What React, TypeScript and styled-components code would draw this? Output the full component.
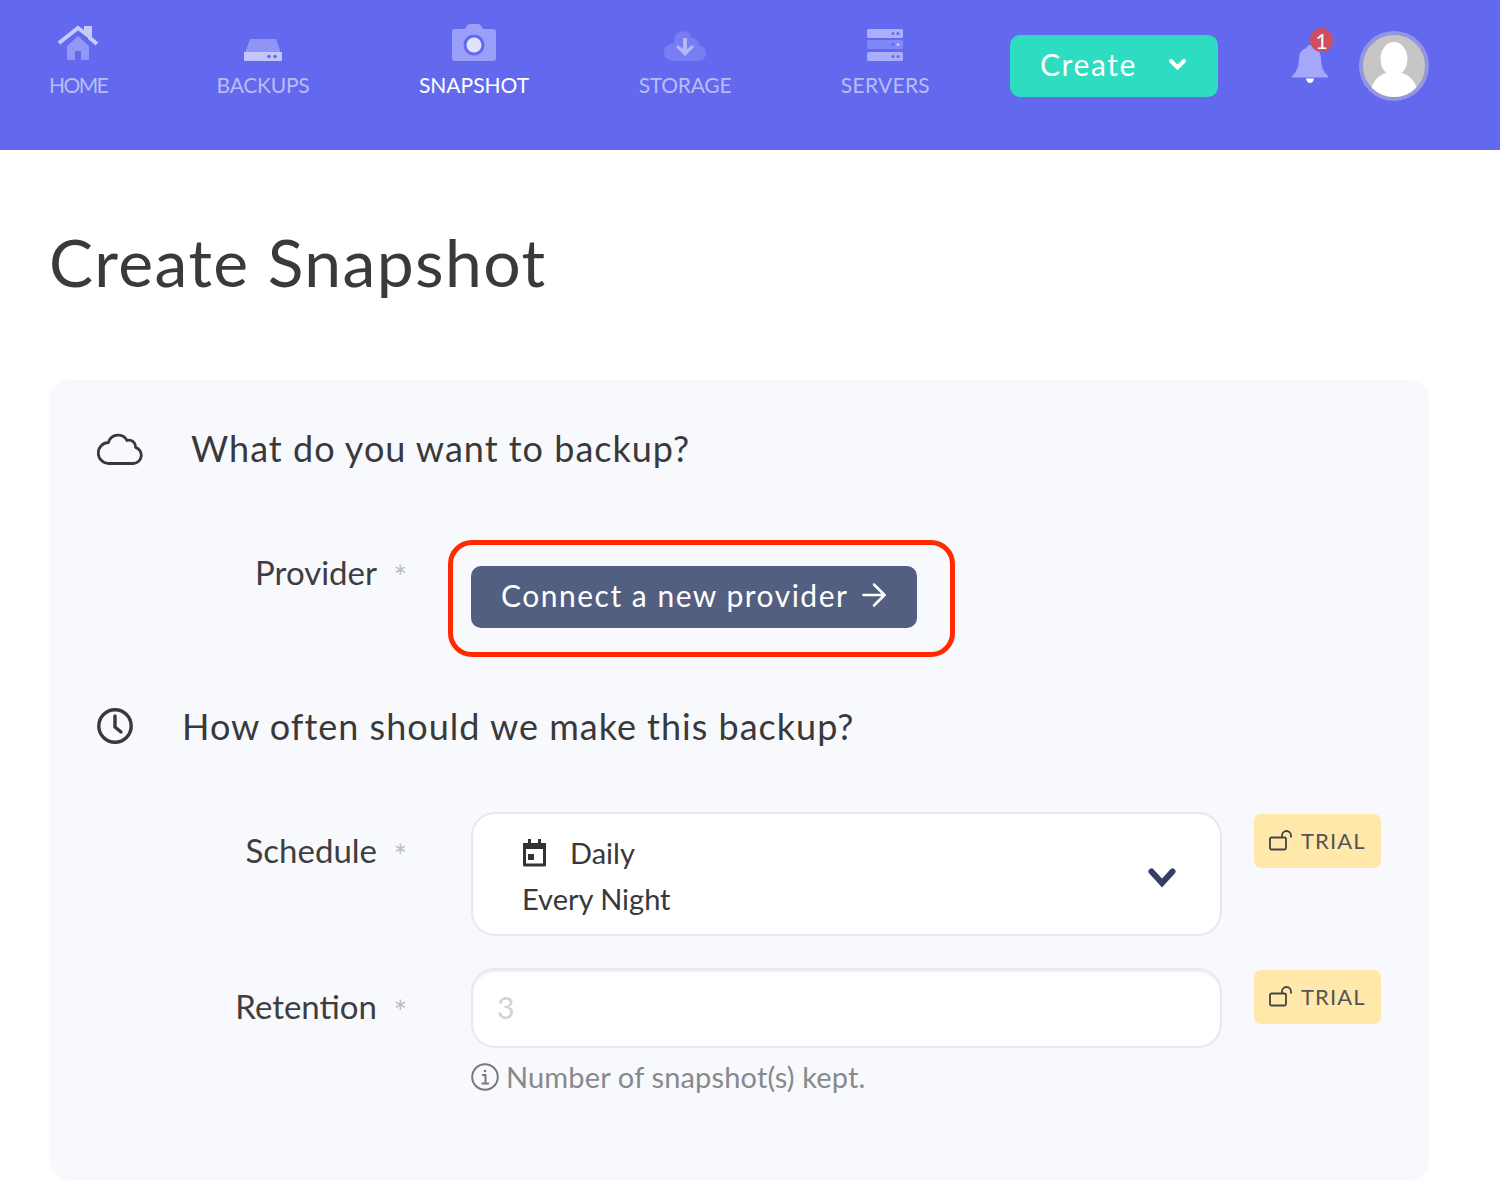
import React from 'react';
import styled, { createGlobalStyle } from 'styled-components';
import { ArrowRight } from 'lucide-react';

const GlobalStyle = createGlobalStyle`
  html, body {
    margin: 0;
    padding: 0;
    background: #ffffff;
    font-family: 'Lato', 'Noto Sans', sans-serif;
    color: #3a3a3c;
  }
  * { box-sizing: border-box; }
`;

const Header = styled.header`
  height: 150px;
  background: #6269ee;
  display: flex;
  align-items: flex-start;
  padding: 24px 71px 0 49px;
`;

const Nav = styled.nav`
  display: flex;
  gap: 109.5px;
  flex-shrink: 0;
`;

const NavItem = styled.a<{ $active?: boolean; $spacing?: number }>`
  display: flex;
  flex-direction: column;
  align-items: center;
  gap: 11px;
  font-size: 21px;
  line-height: 26px;
  letter-spacing: ${({ $spacing }) => $spacing ?? -0.25}px;
  color: ${({ $active }) => ($active ? '#ffffff' : '#b9bcf7')};
`;

const NavIcon = styled.svg`
  height: 37px;
  display: block;
`;

const CreateButton = styled.button`
  flex-shrink: 0;
  width: 208px;
  height: 62px;
  margin: 11px 0 0 80px;
  padding: 0 31px 4px 30px;
  border: 0;
  border-radius: 10px;
  background: #2ddcc1;
  color: #ffffff;
  font: inherit;
  font-size: 30px;
  letter-spacing: 1.6px;
  display: flex;
  align-items: center;
  justify-content: space-between;
`;

const BellWrap = styled.div`
  position: relative;
  flex-shrink: 0;
  width: 36px;
  height: 38px;
  margin: 21px 0 0 74px;
`;

const Badge = styled.span`
  position: absolute;
  top: -17px;
  left: 18px;
  width: 23px;
  height: 24px;
  border-radius: 50%;
  background: #cf4f61;
  color: #ffffff;
  font-size: 21px;
  line-height: 25px;
  text-align: center;
`;

const Avatar = styled.div`
  flex-shrink: 0;
  width: 70px;
  height: 70px;
  margin: 7px 0 0 31px;
  border-radius: 50%;
  border: 4px solid #9496e2;
  background: #c6c6c6;
  overflow: hidden;
`;

const Main = styled.main`
  padding: 0 71px 14px 49px;
`;

const Title = styled.h1`
  margin: 0;
  padding: 73px 0 0 0;
  height: 230px;
  font-size: 66px;
  line-height: 78px;
  font-weight: 400;
  letter-spacing: 1.4px;
`;

const Card = styled.section`
  height: 800px;
  padding: 44px 48px 0 48px;
  border-radius: 20px;
  background: #f8f9fd;
`;

const SectionHead = styled.h2<{ $gap: number; $spaced?: boolean }>`
  margin: ${({ $spaced }) => ($spaced ? '74px' : '0')} 0 0 0;
  height: 48px;
  display: flex;
  align-items: center;
  gap: ${({ $gap }) => $gap}px;
  font-size: 36px;
  font-weight: 400;
  line-height: 48px;
  color: #39393b;
  letter-spacing: 1px;
`;

const Row = styled.div<{ $top: number }>`
  display: grid;
  grid-template-columns: 374px 751px 127px;
  column-gap: 32px;
  align-items: start;
  margin-top: ${({ $top }) => $top}px;
  margin-left: -32px;
  width: max-content;
`;

const Label = styled.label<{ $offset?: number }>`
  display: flex;
  justify-content: flex-end;
  padding: ${({ $offset }) => $offset ?? 17}px 62px 0 0;
  position: relative;
  font-size: 33px;
  line-height: 42px;
  color: #3e3e40;
`;

const Star = styled.span`
  position: absolute;
  right: 32px;
  top: 26px;
  font-size: 32px;
  line-height: 36px;
  color: #bdbdbf;
`;

const ButtonSlot = styled.div`
  position: relative;
  width: 446px;
  margin-top: 33px;
`;

const Annotation = styled.div`
  position: absolute;
  top: -26px;
  left: -23px;
  width: 507px;
  height: 117px;
  border: 5px solid #ff2a00;
  border-radius: 24px;
  pointer-events: none;
`;

const ConnectButton = styled.button`
  width: 446px;
  height: 62px;
  border: 0;
  border-radius: 10px;
  padding: 0 25px 4px 30px;
  background: #535f80;
  color: #ffffff;
  font: inherit;
  font-size: 30px;
  letter-spacing: 1.5px;
  white-space: nowrap;
  display: flex;
  align-items: center;
  justify-content: space-between;
`;

const Select = styled.div`
  height: 124px;
  padding: 18px 44px 0 49px;
  border: 2px solid #e8e9ec;
  border-radius: 24px;
  background: #ffffff;
  display: flex;
  align-items: center;
  justify-content: space-between;
  font-size: 29px;
  color: #38383a;
`;

const SelectLines = styled.div`
  display: flex;
  flex-direction: column;
  gap: 4px;
  align-self: flex-start;
`;

const SelectLine = styled.div`
  display: flex;
  align-items: center;
  gap: 23px;
  line-height: 42px;
`;

const Chevron = styled.svg`
  margin-top: -10px;
`;

const Input = styled.div`
  height: 80px;
  padding: 0 24px 2px;
  border: 2px solid #e8e9ec;
  border-radius: 24px;
  background: #ffffff;
  box-shadow: inset 0 2px 2px #eeeff1;
  display: flex;
  align-items: center;
  font-size: 30px;
  color: #ced3da;
`;

const Hint = styled.div`
  display: flex;
  align-items: center;
  gap: 7px;
  margin-top: 13px;
  font-size: 29px;
  line-height: 32px;
  letter-spacing: 0.15px;
  color: #88898c;
`;

const TrialBadge = styled.div<{ $top: number }>`
  height: 54px;
  margin-top: ${({ $top }) => $top}px;
  padding: 0 0 1px 15px;
  border-radius: 7px;
  background: #ffe8a9;
  display: flex;
  align-items: center;
  gap: 8px;
  font-size: 22px;
  letter-spacing: 1.1px;
  color: #555555;
`;

function TrialTag({ top }: { top: number }) {
  return (
    <TrialBadge $top={top}>
      <svg width="24" height="21" viewBox="0 0 24 21" fill="none" stroke="#444" strokeWidth="1.8">
        <rect x="1" y="7.500" width="16" height="12" rx="1.500" />
        <path d="M13 7.500V5.500a4.500 4.500 0 0 1 9 0v2" />
      </svg>
      TRIAL
    </TrialBadge>
  );
}

function App() {
  return (
    <>
      <GlobalStyle />
      <Header>
        <Nav>
          <NavItem $spacing={-1.6}>
            <NavIcon viewBox="0 0 42 37" width="42">
              <path d="M10 22 21 12l11 10v14h-8v-9h-6v9h-8z" fill="#9296f5" />
              <path d="M2 19 21 4l8 6V4h4v10l7 6" fill="none" stroke="#c6c9fa" strokeWidth="4" />
            </NavIcon>
            HOME
          </NavItem>
          <NavItem>
            <NavIcon viewBox="0 0 40 37" width="40">
              <path d="M7 15h26l5 14H2z" fill="#8f94f5" />
              <path d="M1 28h38v8a1 1 0 0 1-1 1H2a1 1 0 0 1-1-1z" fill="#c3c6fa" />
              <circle cx="26" cy="32.500" r="1.800" fill="#6269ee" />
              <circle cx="32" cy="32.500" r="1.800" fill="#6269ee" />
            </NavIcon>
            BACKUPS
          </NavItem>
          <NavItem $active $spacing={0}>
            <NavIcon viewBox="0 0 44 37" width="44">
              <path d="M13 5 15 1.500Q16 0 18 0h8q2 0 3 1.500L31 5h10q3 0 3 3v26q0 3-3 3H3q-3 0-3-3V8q0-3 3-3z" fill="#9a9ff7" />
              <circle cx="22" cy="21" r="10.500" fill="#6269ee" />
              <circle cx="22" cy="21" r="7.500" fill="#e1e3fd" />
            </NavIcon>
            SNAPSHOT
          </NavItem>
          <NavItem>
            <NavIcon viewBox="0 0 44 37" width="44">
              <path d="M10 37q-9-1-9-9 0-6 6-8 2-1 4-1 0-11 9-12 7 0 8 7 7-1 8 7 7 2 7 8 0 7-8 8z" fill="#777df2" />
              <path d="M20 14h4v11l5-4 2 2-9 9-9-9 2-2 5 4z" fill="#b4b7f9" />
            </NavIcon>
            STORAGE
          </NavItem>
          <NavItem $spacing={0.3}>
            <NavIcon viewBox="0 0 36 37" width="36">
              <rect y="5" width="36" height="9" rx="1.500" fill="#abaffa" />
              <rect y="16" width="36" height="9" rx="1.500" fill="#8187f4" />
              <rect y="28" width="36" height="9" rx="1.500" fill="#abaffa" />
              <circle cx="26" cy="9.500" r="1.500" fill="#6269ee" /><circle cx="31" cy="9.500" r="1.500" fill="#6269ee" />
              <circle cx="26" cy="20.500" r="1.500" fill="#6269ee" /><circle cx="31" cy="20.500" r="1.500" fill="#c3c6fa" />
              <circle cx="26" cy="32.500" r="1.500" fill="#6269ee" /><circle cx="31" cy="32.500" r="1.500" fill="#6269ee" />
            </NavIcon>
            SERVERS
          </NavItem>
        </Nav>
        <CreateButton>
          Create
          <svg width="19" height="13" viewBox="0 0 19 13">
            <path d="M3 3l6.500 6.500L16 3" fill="none" stroke="#fff" strokeWidth="4" strokeLinecap="round" />
          </svg>
        </CreateButton>
        <BellWrap>
          <svg width="36" height="38" viewBox="0 0 36 38">
            <path d="M18 0q3 0 3.500 3Q29 5 29 14q0 11 7 17v1.500H0V31q7-6 7-17 0-9 7.500-11Q15 0 18 0z" fill="#a5a8f8" />
            <path d="M14 33.500h8q-1 4.500-4 4.500t-4-4.500z" fill="#ffffff" />
          </svg>
          <Badge>1</Badge>
        </BellWrap>
        <Avatar>
          <svg width="62" height="62" viewBox="0 0 62 62">
            <ellipse cx="31" cy="24" rx="13.500" ry="17" fill="#ffffff" />
            <path d="M6 62q3-20 17-24 8 4 16 0 14 4 17 24z" fill="#ffffff" />
          </svg>
        </Avatar>
      </Header>
      <Main>
        <Title>Create Snapshot</Title>
        <Card>
          <SectionHead $gap={48}>
            <svg width="46" height="33" viewBox="0 0 46 33" fill="none" stroke="#39393b" strokeWidth="2.800">
              <path d="M12 31.500H36A8.300 8.300 0 0 0 38.500 15.300 6.500 6.500 0 0 0 30 8.500 10 10 0 0 0 11.500 10.500 10.500 10.500 0 0 0 12 31.500z" strokeLinejoin="round" />
            </svg>
            What do you want to backup?
          </SectionHead>
          <Row $top={61}>
            <Label $offset={18}>Provider<Star>*</Star></Label>
            <ButtonSlot>
              <ConnectButton>
                Connect a new provider
                <ArrowRight size={36} strokeWidth={1.700} color="#fff" />
              </ConnectButton>
              <Annotation />
            </ButtonSlot>
          </Row>
          <SectionHead $gap={49} $spaced>
            <svg width="36" height="36" viewBox="0 0 36 36" fill="none" stroke="#39393b" strokeWidth="3.400">
              <circle cx="18" cy="18" r="16.200" />
              <path d="M18 8v11l6 5" strokeLinecap="round" />
            </svg>
            How often should we make this backup?
          </SectionHead>
          <Row $top={62}>
            <Label>Schedule<Star>*</Star></Label>
            <Select>
              <SelectLines>
                <SelectLine>
                  <svg width="25" height="28" viewBox="0 0 25 28">
                    <path d="M2.500 6h20v20h-20z" fill="none" stroke="#333" strokeWidth="3" strokeLinejoin="round" />
                    <rect x="1" y="4" width="23" height="6" fill="#333" />
                    <rect x="6" y="0" width="3" height="6" fill="#333" />
                    <rect x="16" y="0" width="3" height="6" fill="#333" />
                    <rect x="6" y="15" width="6" height="6" fill="#333" />
                  </svg>
                  Daily
                </SelectLine>
                <SelectLine>Every Night</SelectLine>
              </SelectLines>
              <Chevron width="28" height="21" viewBox="0 0 28 21">
                <path d="M3.500 3.500 14 15 24.500 3.500" fill="none" stroke="#333f68" strokeWidth="6" strokeLinecap="round" />
              </Chevron>
            </Select>
            <TrialTag top={2} />
          </Row>
          <Row $top={32}>
            <Label>Retention<Star>*</Star></Label>
            <div>
              <Input>3</Input>
              <Hint>
                <svg width="28" height="28" viewBox="0 0 28 28" fill="none" stroke="#77787b">
                  <circle cx="14" cy="14" r="12.800" strokeWidth="2" />
                  <path d="M11 12h3.500v8M10.500 20.500h7.500" strokeWidth="2" />
                  <circle cx="14" cy="8" r="1.300" fill="#77787b" stroke="none" />
                </svg>
                Number of snapshot(s) kept.
              </Hint>
            </div>
            <TrialTag top={2} />
          </Row>
        </Card>
      </Main>
    </>
  );
}

export default App;
